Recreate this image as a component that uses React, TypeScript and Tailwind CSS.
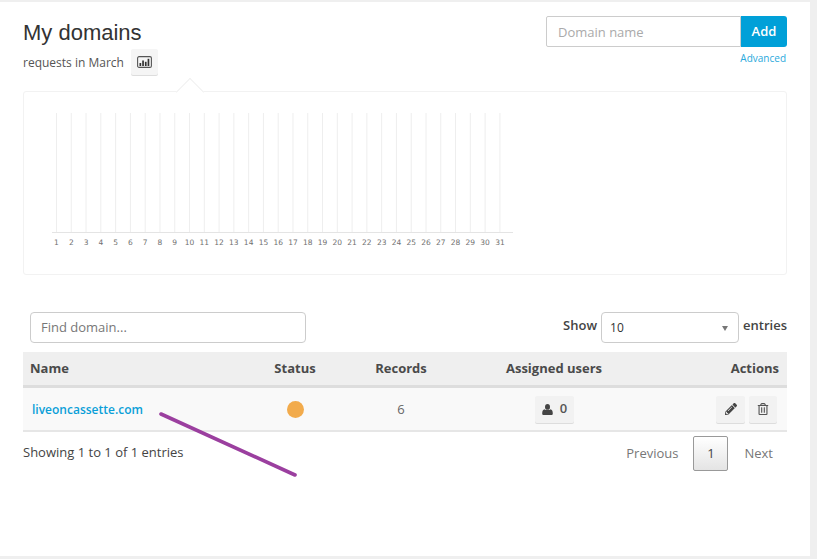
import { FaPencilAlt, FaRegTrashAlt } from "react-icons/fa";

const days = Array.from({ length: 31 }, (_, i) => i + 1);

function Chart() {
  return (
    <svg width="500" height="160" className="block">
      <line x1="28" x2="489" y1="140.5" y2="140.5" stroke="#e4e4e4" />
      {days.map((d, i) => {
        const x = 32.5 + i * 14.78;
        return (
          <g key={d}>
            <line x1={x} x2={x} y1="21" y2="140" stroke="#eeeeee" />
            <text x={x} y="152.5" textAnchor="middle" fontSize="7.5" fill="#707070" fontFamily="'DejaVu Sans', sans-serif">
              {d}
            </text>
          </g>
        );
      })}
    </svg>
  );
}

function ChartIcon() {
  return (
    <svg width="15" height="12" viewBox="0 0 15 12" fill="none">
      <rect x="0.6" y="0.6" width="13.8" height="10.8" rx="1.5" stroke="#555" strokeWidth="1.1" />
      <rect x="2.5" y="7" width="1.7" height="3" fill="#333" />
      <rect x="5.2" y="4.5" width="1.7" height="5.5" fill="#333" />
      <rect x="7.9" y="5.8" width="1.7" height="4.2" fill="#333" />
      <rect x="10.6" y="2.8" width="1.7" height="7.2" fill="#333" />
    </svg>
  );
}

function UserIcon() {
  return (
    <svg width="11" height="11" viewBox="0 0 11 11" fill="#444">
      <ellipse cx="5.5" cy="2.9" rx="2.5" ry="2.9" />
      <path d="M2.6 5.2 C3.4 6.4 7.6 6.4 8.4 5.2 C10 5.6 10.8 7 10.8 9.4 C10.8 10.4 10.2 11 9.3 11 H1.7 C0.8 11 0.2 10.4 0.2 9.4 C0.2 7 1 5.6 2.6 5.2 Z" />
    </svg>
  );
}

export default function App() {
  return (
    <div className="h-[559px] w-[817px] overflow-hidden bg-[#efefef] pt-[2px] pr-[7px] pb-[3px] font-['Open_Sans',sans-serif]">
      <div className="relative h-full bg-white px-[23px] pt-[14px]">
        <div className="flex items-start justify-between">
          <div>
            <h1 className="mt-[2px] font-['Liberation_Sans',sans-serif] text-[22px] leading-[30px] text-[#333]">My domains</h1>
            <div className="mt-[1px] flex items-center gap-[7px]">
              <span className="pt-[1px] text-[12px] leading-[25px] text-[#555]">requests in March</span>
              <button className="flex h-[26px] w-[27px] items-center justify-center rounded-[2px] bg-[#f5f5f5] shadow-[0_1px_0_#ddd]">
                <ChartIcon />
              </button>
            </div>
          </div>
          <div className="flex flex-col items-end">
            <div className="flex h-[31px] w-[241px]">
              <div className="flex flex-1 items-center rounded-l-[2px] border border-[#ccc] pt-[2px] pl-[11px] text-[13px] text-[#aaa]">Domain name</div>
              <button className="w-[46px] rounded-r-[3px] bg-[#00a0d8] text-[13px] font-semibold text-white">Add</button>
            </div>
            <a className="mt-[4px] mr-[1px] text-[10px] leading-[14px] text-[#2aa9dc]">Advanced</a>
          </div>
        </div>

        <div className="relative mt-[16px] h-[184px] rounded-[3px] border border-[#f2f2f2]">
          <div className="absolute top-[-10px] left-[156px] h-[20px] w-[20px] rotate-45 border-t border-l border-[#f0f0f0] bg-white" />
          <div className="relative">
            <Chart />
          </div>
        </div>

        <div className="mt-[37px] flex items-center justify-between pl-[7px]">
          <div className="flex h-[31px] w-[276px] items-center rounded-[4px] border border-[#ccc] pt-[1px] pl-[10px] text-[13px] text-[#777]">Find domain...</div>
          <div className="flex items-center text-[13px] font-semibold text-[#444]">
            <span className="mb-[3px]">Show</span>
            <div className="relative mx-[4px] flex h-[31px] w-[138px] items-center rounded-[4px] border border-[#ccc] pt-[1px] pl-[8px] text-[12px] font-normal text-[#333]">
              10
              <span className="absolute top-[13px] right-[10px] h-0 w-0 border-x-[3.5px] border-t-[5px] border-x-transparent border-t-[#777]" />
            </div>
            <span className="mb-[3px]">entries</span>
          </div>
        </div>

        <div className="mt-[9px] grid h-[36px] grid-cols-[222px_100px_112px_194px_136px] items-center border-b-[3px] border-[#ddd] bg-[#efefef] pt-[1px] text-[13px] font-bold text-[#4a4a4a]">
          <div className="pl-[7px]">Name</div>
          <div className="text-center">Status</div>
          <div className="text-center">Records</div>
          <div className="text-center">Assigned users</div>
          <div className="pr-[8px] text-right">Actions</div>
        </div>
        <div className="grid h-[44px] grid-cols-[222px_100px_112px_194px_136px] items-center border-b-[2px] border-[#e6e6e6] bg-[#f9f9f9] text-[13px]">
          <a className="pt-[2px] pl-[9px] text-[12px] font-semibold text-[#0a9fd8]">liveoncassette.com</a>
          <div className="flex justify-center">
            <span className="h-[17px] w-[17px] rounded-full bg-[#f2ab4c]" />
          </div>
          <div className="pt-[2px] text-center text-[#666]">6</div>
          <div className="flex justify-center pl-[1px]">
            <button className="flex h-[27px] w-[39px] items-center justify-center gap-[7px] rounded-[2px] bg-[#f2f2f2] font-semibold text-[#555] shadow-[0_1px_0_#ddd]">
              <UserIcon />
              0
            </button>
          </div>
          <div className="flex justify-end gap-[4px] pr-[10px]">
            <button className="flex h-[27px] w-[29px] items-center justify-center rounded-[2px] bg-[#f2f2f2] shadow-[0_1px_0_#ddd]">
              <FaPencilAlt className="h-[12px] w-[12px] text-[#444]" />
            </button>
            <button className="flex h-[27px] w-[28px] items-center justify-center rounded-[2px] bg-[#f2f2f2] shadow-[0_1px_0_#ddd]">
              <FaRegTrashAlt className="h-[12px] w-[12px] text-[#555]" />
            </button>
          </div>
        </div>

        <div className="mt-[4px] flex items-start justify-between">
          <div className="mt-[7px] text-[13px] text-[#444]">Showing 1 to 1 of 1 entries</div>
          <div className="flex items-center text-[13px] text-[#777]">
            <span>Previous</span>
            <span className="mr-[16px] ml-[15px] flex h-[35px] w-[35px] items-center justify-center rounded-[2px] border border-[#999] bg-gradient-to-b from-white to-[#e4e4e4] text-[#444]">1</span>
            <span className="mr-[14px]">Next</span>
          </div>
        </div>

        <svg className="pointer-events-none absolute top-[408px] left-[158px]" width="142" height="70">
          <path d="M3 4 L137 65" stroke="#9b3f9f" strokeWidth="3.6" strokeLinecap="round" fill="none" />
        </svg>
      </div>
    </div>
  );
}
